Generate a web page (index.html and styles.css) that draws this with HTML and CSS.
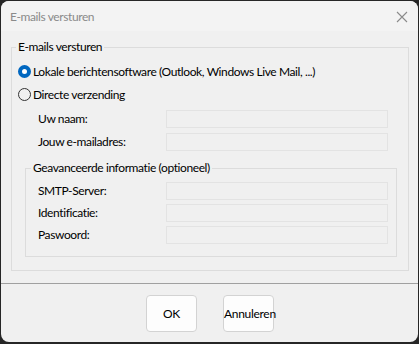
FILE: index.html
```html
<!DOCTYPE html>
<html lang="nl">
<head>
<meta charset="utf-8">
<title>E-mails versturen</title>
<link rel="stylesheet" href="styles.css">
</head>
<body>
<div class="window">
  <div class="titlebar">
    <span class="title">E-mails versturen</span>
    <svg class="close" width="12" height="12" viewBox="0 0 12 12"><path d="M1 1 L11 11 M11 1 L1 11" stroke="#8a8a8a" stroke-width="1.1" fill="none"/></svg>
  </div>
  <div class="content">
    <fieldset class="group outer">
      <legend>E-mails versturen</legend>
      <label class="radio-row"><span class="radio checked"></span>Lokale berichtensoftware (Outlook, Windows Live Mail, ...)</label>
      <label class="radio-row"><span class="radio"></span>Directe verzending</label>
      <div class="fields top-fields">
        <span class="lbl">Uw naam:</span><span class="input"></span>
        <span class="lbl">Jouw e-mailadres:</span><span class="input"></span>
      </div>
      <fieldset class="group inner">
        <legend>Geavanceerde informatie (optioneel)</legend>
        <div class="fields inner-fields">
          <span class="lbl">SMTP-Server:</span><span class="input"></span>
          <span class="lbl">Identificatie:</span><span class="input"></span>
          <span class="lbl">Paswoord:</span><span class="input"></span>
        </div>
      </fieldset>
    </fieldset>
  </div>
  <div class="footer">
    <button class="btn">OK</button>
    <button class="btn">Annuleren</button>
  </div>
</div>
</body>
</html>
```
FILE: styles.css
```css
html, body {
  margin: 0;
  padding: 0;
  background: #262626;
  width: 419px;
  height: 344px;
  overflow: hidden;
}
body {
  font-family: "Lato", "Noto Sans", sans-serif;
  font-size: 12px;
  letter-spacing: -0.4px;
  color: #000;
}
.window {
  margin: 1px 0 0 1px;
  width: 417px;
  height: 341px;
  border-radius: 8px;
  overflow: hidden;
  background: #f0f0f0;
  display: flex;
  flex-direction: column;
}
.titlebar {
  height: 30px;
  flex: none;
  background: #f3f3f3;
  display: flex;
  align-items: center;
  padding: 0 9px 0 9px;
}
.title {
  flex: 1;
  color: #8a8a8a;
  line-height: 16px;
  margin-top: 1px;
}
.close {
  margin-right: 1px;
  margin-top: 1px;
}
.content {
  padding: 8px 9px 0 10px;
  flex: none;
}
.group {
  margin: 0;
  border: 1px solid #dcdcdc;
  min-width: 0;
}
.group legend {
  line-height: 16px;
  padding: 0 2px;
  margin-left: 4px;
}
.outer {
  padding: 5px 11px 12px 0;
  height: 232px;
  box-sizing: border-box;
}
.radio-row {
  display: flex;
  align-items: center;
  height: 23px;
  margin-left: 6px;
  line-height: 16px;
}
.radio {
  width: 11px;
  height: 11px;
  border: 1px solid #333;
  border-radius: 50%;
  margin-right: 2px;
  box-sizing: content-box;
  flex: none;
  background: #f0f0f0;
}
.radio.checked {
  background: #fff;
  border: 4px solid #0067c0;
  width: 5px;
  height: 5px;
}
.fields {
  display: grid;
  grid-template-columns: 128px 222px;
  row-gap: 5px;
  align-items: center;
}
.top-fields {
  margin-top: 4px;
  margin-left: 26px;
}
.lbl {
  line-height: 16px;
}
.input {
  height: 18px;
  box-sizing: border-box;
  border: 1px solid #e3e3e3;
  background: #f0f0f0;
}
.inner {
  margin: 9px 0 0 13px;
  padding: 6px 7px 12px 0;
}
.inner legend {
  margin-left: 5px;
}
.inner-fields {
  margin-left: 12px;
  row-gap: 4px;
}
.footer {
  margin-top: 12px;
  border-top: 1px solid #a0a0a0;
  display: flex;
  justify-content: center;
  gap: 26px;
  padding-top: 11px;
  padding-left: 1px;
}
.btn {
  width: 51px;
  height: 37px;
  border: 1px solid #d3d3d3;
  border-radius: 4px;
  background: #fdfdfd;
  font-family: inherit;
  font-size: 12px;
  letter-spacing: -0.3px;
  color: #000;
  padding: 0;
  white-space: nowrap;
  overflow: visible;
}
```
